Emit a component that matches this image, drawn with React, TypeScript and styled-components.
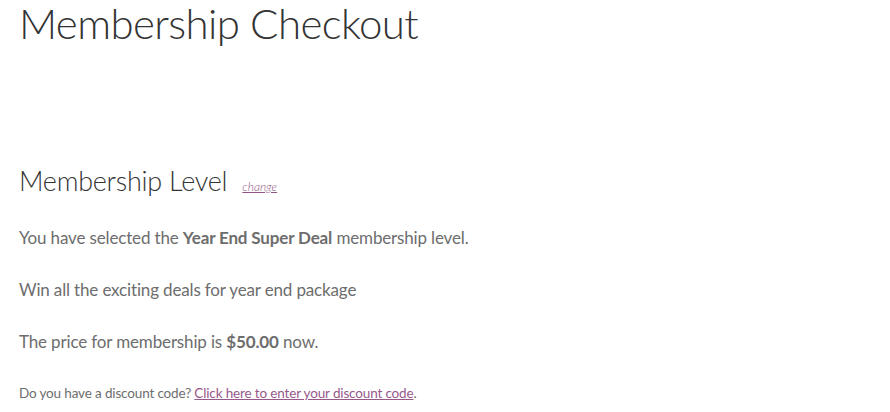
import React from "react";
import styled, { createGlobalStyle } from "styled-components";

const Global = createGlobalStyle`
  html, body { margin: 0; padding: 0; background: #ffffff; }
  body { font-family: Lato, "Open Sans", sans-serif; color: #6d6d6d; }
`;

const Page = styled.main`
  display: flex;
  flex-direction: column;
  padding: 0 19px;
`;

const Title = styled.h1`
  margin: 0;
  font-size: 42px;
  line-height: 46px;
  font-weight: 300;
  color: #333333;
  letter-spacing: -0.6px;
`;

const SectionTitle = styled.h3`
  margin: 118px 0 0 0;
  font-size: 27px;
  line-height: 34px;
  font-weight: 300;
  color: #333333;
  letter-spacing: -0.25px;
  display: flex;
  align-items: baseline;
  gap: 15px;
`;

const SmallLink = styled.a`
  font-size: 12px;
  font-style: italic;
  letter-spacing: 0;
  color: #8f5584;
  text-decoration: underline;
`;

const Para = styled.p<{ $top: number }>`
  margin: ${(p) => p.$top}px 0 0 0;
  font-size: 17px;
  line-height: 26px;
  letter-spacing: -0.15px;
  strong { font-weight: 700; }
`;

const Small = styled.p`
  margin: 27px 0 0 0;
  font-size: 13.5px;
  line-height: 22px;
  letter-spacing: -0.15px;
  a { color: #96588a; text-decoration: underline; }
`;

export default function App() {
  return (
    <>
      <Global />
      <Page>
        <Title>Membership Checkout</Title>
        <SectionTitle>
          Membership Level <SmallLink href="#">change</SmallLink>
        </SectionTitle>
        <Para $top={21}>
          You have selected the <strong>Year End Super Deal</strong> membership level.
        </Para>
        <Para $top={26}>Win all the exciting deals for year end package</Para>
        <Para $top={26}>
          The price for membership is <strong>$50.00</strong> now.
        </Para>
        <Small>
          Do you have a discount code? <a href="#">Click here to enter your discount code</a>.
        </Small>
      </Page>
    </>
  );
}
